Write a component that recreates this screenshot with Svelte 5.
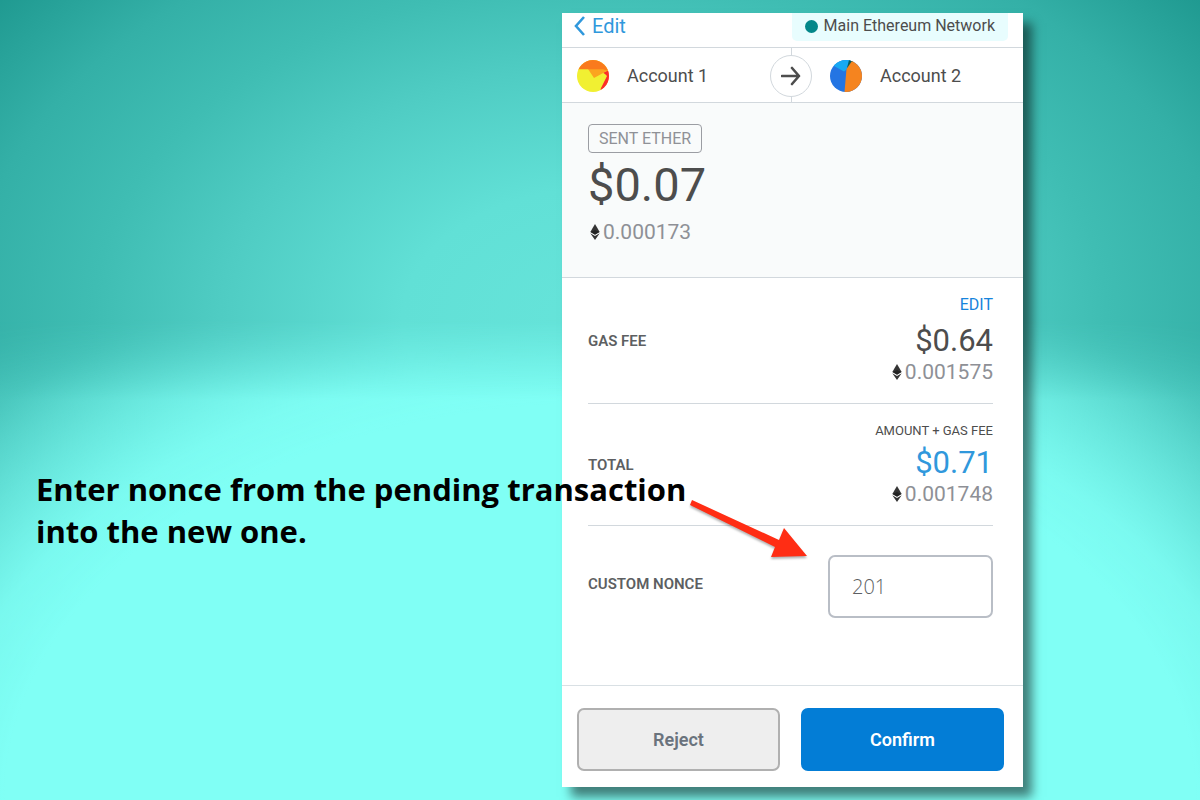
<script>
  let nonce = $state('201');
</script>

{#snippet ether()}
  <svg class="ether" viewBox="0 0 10 16" aria-hidden="true">
    <path d="M5 0 9.7 8 5 10.7.3 8Z" fill="#343434" />
    <path d="M.3 9.3 5 12l4.7-2.7L5 16Z" fill="#343434" />
    <path d="M.8 8 5 5.9 9.2 8 5 10.5Z" fill="#222" />
  </svg>
{/snippet}

<main class="stage">
  <section class="panel">
    <header class="topbar">
      <a class="back" href="#edit">
        <svg viewBox="0 0 12 20" aria-hidden="true">
          <path d="M10 1 2 10l8 9" fill="none" stroke="currentColor" stroke-width="2.6" />
        </svg>
        Edit
      </a>
      <div class="network"><span class="dot"></span>Main Ethereum Network</div>
    </header>

    <div class="accounts">
      <div class="account">
        <svg class="avatar" viewBox="0 0 32 32" aria-hidden="true">
          <defs><clipPath id="c1"><circle cx="16" cy="16" r="16" /></clipPath></defs>
          <g clip-path="url(#c1)">
            <rect width="32" height="32" fill="#f1f032" />
            <path d="M26 12.700 32 10v22h-9l1-4 6-12-2-2Z" fill="#fb2d2a" />
            <path d="M11 9h18l2 1.500-3 1.500-11 6Z" fill="#fba51f" />
            <path d="M0-1h32v10l-2 1.500L26 9.300H2L0 10Z" fill="#fa7a1d" />
          </g>
        </svg>
        <span>Account 1</span>
      </div>
      <div class="direction">
        <span class="circle">
          <svg viewBox="0 0 20 20" aria-hidden="true">
            <path d="M1 10h17M11 2l7 8-7 8" fill="none" stroke="#4d4d4d" stroke-width="2.600" stroke-linecap="round" stroke-linejoin="round" />
          </svg>
        </span>
      </div>
      <div class="account to">
        <svg class="avatar" viewBox="0 0 32 32" aria-hidden="true">
          <defs><clipPath id="c2"><circle cx="16" cy="16" r="16" /></clipPath></defs>
          <g clip-path="url(#c2)">
            <rect width="32" height="32" fill="#2475e3" />
            <path d="M0 0h21l-5 10-2 1.500L4 6Z" fill="#18a9f3" />
            <path d="M19 0h5v3l-7 5Z" fill="#075b5f" />
            <path d="M22 1h10v31H14.500L16.500 9Z" fill="#f5841f" />
          </g>
        </svg>
        <span>Account 2</span>
      </div>
    </div>

    <div class="summary">
      <span class="tag">SENT ETHER</span>
      <strong class="amount">$0.07</strong>
      <span class="eth">{@render ether()}0.000173</span>
    </div>

    <div class="details">
      <div class="row">
        <span class="label">GAS FEE</span>
        <div class="values">
          <button class="edit" type="button">EDIT</button>
          <span class="price">$0.64</span>
          <span class="eth">{@render ether()}0.001575</span>
        </div>
      </div>
      <div class="row">
        <span class="label">TOTAL</span>
        <div class="values">
          <span class="note">AMOUNT + GAS FEE</span>
          <span class="price blue">$0.71</span>
          <span class="eth">{@render ether()}0.001748</span>
        </div>
      </div>
      <div class="nonce">
        <label class="label" for="nonce">CUSTOM NONCE</label>
        <input id="nonce" type="text" inputmode="numeric" bind:value={nonce} />
      </div>
    </div>

    <footer class="actions">
      <button class="reject" type="button">Reject</button>
      <button class="confirm" type="button">Confirm</button>
    </footer>
  </section>

  <div class="callout">
    <p>Enter nonce from the pending transaction<br />into the new one.</p>
    <svg class="pointer" viewBox="0 0 124 68" aria-hidden="true">
      <path d="M6 3 93 43l5-12 23 28-36 1 4-10L4 8Z" fill="#ff2d14" />
    </svg>
  </div>
</main>

<style>
  :global(body) {
    margin: 0;
  }

  .stage {
    position: relative;
    isolation: isolate;
    box-sizing: border-box;
    min-height: 100vh;
    display: grid;
    grid-template-columns: 562fr 461fr 177fr;
    padding: 13px 0;
    overflow: hidden;
    color: #4d4d4d;
    font-family: Roboto, sans-serif;
    background: radial-gradient(ellipse 66% 66% at 50% 40%, #66e4da 0%, #61e0d6 25%, #4fccc3 48%, #3fbdb3 64%, #34b0a7 80%, #1c968d 100%);
  }

  /* Lit floor that fades into the wall behind it */
  .stage::before {
    content: '';
    position: absolute;
    inset: 0;
    z-index: -1;
    background: radial-gradient(
      ellipse 80% 80% at 50% 100%,
      #80fff5 0%,
      #80fff5 62%,
      rgba(128, 255, 245, 0.93) 69%,
      rgba(128, 255, 245, 0.82) 73%,
      rgba(128, 255, 245, 0.66) 78%,
      rgba(128, 255, 245, 0.48) 83%,
      rgba(128, 255, 245, 0.28) 88%,
      rgba(128, 255, 245, 0) 100%
    );
    mask-image: linear-gradient(transparent 40%, #000 50%);
  }

  .panel {
    grid-area: 1 / 2;
    display: flex;
    flex-direction: column;
    background: #fff;
    box-shadow: 9px 10px 10px rgba(0, 0, 0, 0.5);
  }

  .topbar {
    display: flex;
    justify-content: space-between;
    align-items: flex-start;
    height: 34px;
    padding: 0 15px 0 12px;
    border-bottom: 1px solid #d2d8dd;
  }

  .back {
    display: flex;
    align-items: center;
    gap: 6px;
    font-size: 20px;
    line-height: 26px;
    color: #3098dc;
    text-decoration: none;
  }

  .back svg {
    width: 12px;
    height: 20px;
  }

  .network {
    display: flex;
    align-items: center;
    gap: 6px;
    padding: 0 13px 2px;
    border-radius: 0 0 5px 5px;
    font-size: 16px;
    line-height: 26px;
    background: #e8fdfe;
  }

  .dot {
    width: 13px;
    height: 13px;
    border-radius: 50%;
    background: #038789;
  }

  .accounts {
    display: grid;
    grid-template-columns: 1fr 42px 1fr;
    height: 54px;
    padding-right: 3px;
    border-bottom: 1px solid #d2d8dd;
  }

  .account {
    display: flex;
    align-items: center;
    gap: 18px;
    padding: 2px 0 0 15px;
    font-size: 18px;
    line-height: 24px;
  }

  .account.to {
    padding-left: 18px;
  }

  .avatar {
    width: 32px;
    height: 32px;
  }

  .direction {
    display: grid;
    place-items: center;
    padding-top: 2px;
    background: linear-gradient(#d2d8dd, #d2d8dd) center / 1px 100% no-repeat;
  }

  .circle {
    display: grid;
    place-items: center;
    box-sizing: border-box;
    width: 42px;
    height: 42px;
    border: 1px solid #d2d8dd;
    border-radius: 50%;
    background: #fff;
  }

  .circle svg {
    width: 20px;
    height: 20px;
  }

  .summary {
    display: flex;
    flex-direction: column;
    align-items: flex-start;
    padding: 21px 26px 34px;
    border-bottom: 1px solid #d2d8dd;
    background: #f9fbfb;
  }

  .tag {
    padding: 0 10px;
    border: 1px solid #9b9da3;
    border-radius: 4px;
    font-size: 16px;
    line-height: 27px;
    color: #8f9197;
  }

  .amount {
    margin-bottom: 4px;
    font-size: 47px;
    font-weight: 400;
    line-height: 64px;
  }

  .eth {
    display: flex;
    align-items: center;
    gap: 3px;
    font-size: 21px;
    line-height: 22px;
    color: #8e9096;
  }

  .summary .eth {
    padding-left: 2px;
  }

  .ether {
    width: 10px;
    height: 16px;
  }

  .details {
    flex: 1;
    padding: 0 30px 0 26px;
  }

  .row {
    display: flex;
    justify-content: space-between;
    align-items: center;
    padding: 15px 0 20px;
    border-bottom: 1px solid #d2d8dd;
  }

  .label {
    padding-top: 5px;
    font-size: 15px;
    font-weight: 600;
    line-height: 20px;
    color: #5d5f62;
  }

  .values {
    display: flex;
    flex-direction: column;
    align-items: flex-end;
  }

  .edit {
    margin: 0 0 4px;
    padding: 0;
    border: 0;
    background: none;
    font: 16px/24px Roboto, sans-serif;
    color: #1784dc;
  }

  .price {
    font-size: 31px;
    line-height: 40px;
  }

  .blue {
    color: #3098dc;
  }

  .note {
    font-size: 13px;
    line-height: 24px;
  }

  .nonce {
    display: flex;
    justify-content: space-between;
    align-items: center;
    padding-top: 29px;
  }

  .nonce .label {
    padding: 0 0 5px;
  }

  input {
    box-sizing: border-box;
    width: 165px;
    height: 63px;
    padding: 0 22px;
    border: 2px solid #b9bec6;
    border-radius: 7px;
    background: #fff;
    font: 300 20px 'Open Sans', sans-serif;
    color: #5d5f62;
  }

  .actions {
    display: grid;
    grid-template-columns: 1fr 1fr;
    gap: 21px;
    padding: 22px 19px 16px 15px;
    border-top: 1px solid #d9e0e4;
  }

  .actions button {
    height: 63px;
    border: 2px solid #b0b0b0;
    border-radius: 7px;
    font: 600 18px Roboto, sans-serif;
    color: #6a737d;
    background: #eee;
  }

  .actions .confirm {
    border-color: #037dd6;
    color: #fff;
    background: #037dd6;
  }

  .callout {
    grid-area: 1 / 1 / 2 / 4;
    z-index: 1;
    align-self: start;
    justify-self: start;
    display: flex;
    margin: 455px 0 0 36px;
    pointer-events: none;
  }

  .callout p {
    margin: 0;
    font: 700 31px/42px 'Open Sans', sans-serif;
    color: #000;
    white-space: nowrap;
  }

  .pointer {
    width: 124px;
    height: 68px;
    margin: 29px 0 0;
    filter: drop-shadow(0 2px 1px rgba(0, 0, 0, 0.3));
  }
</style>
